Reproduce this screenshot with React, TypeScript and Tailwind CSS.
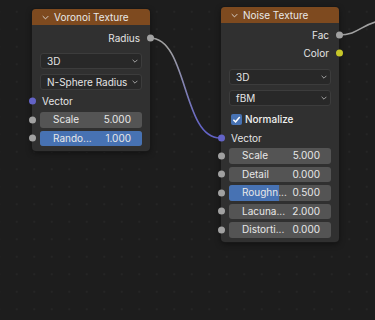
import React from 'react';

type SocketColor = 'gray' | 'purple' | 'yellow';

const socketClass: Record<SocketColor, string> = {
  gray: 'bg-[#a1a1a1]',
  purple: 'bg-[#6363c7]',
  yellow: 'bg-[#c7c729]',
};

function Socket({ side, color }: { side: 'left' | 'right'; color: SocketColor }) {
  return (
    <span
      className={`absolute top-1/2 -translate-y-1/2 w-[7px] h-[7px] rounded-full ${socketClass[color]} ${
        side === 'left' ? 'left-[-3.5px]' : 'right-[-3.5px]'
      }`}
    />
  );
}

function Chevron({ className = '' }: { className?: string }) {
  return (
    <svg viewBox="0 0 10 6" className={className} fill="none" stroke="currentColor" strokeWidth="1.2">
      <path d="M1 1 L5 5 L9 1" />
    </svg>
  );
}

function NodeHeader({ title }: { title: string }) {
  return (
    <div className="h-[16px] rounded-t-[4px] bg-[#7e4a1f] flex items-center pl-[10px] gap-[5px] text-[#e8e8e8]">
      <Chevron className="w-[7px] h-[5px]" />
      <span className="text-[10px] leading-none">{title}</span>
    </div>
  );
}

function Output({ label, color, className = '' }: { label: string; color: SocketColor; className?: string }) {
  return (
    <div className={`relative h-[16px] flex items-center justify-end pr-[10px] ${className}`}>
      <span className="text-[10px] text-[#e4e4e4]">{label}</span>
      <Socket side="right" color={color} />
    </div>
  );
}

function Input({ label, className = '' }: { label: string; className?: string }) {
  return (
    <div className={`relative h-[16px] flex items-center pl-[10px] ${className}`}>
      <span className="text-[10px] text-[#e4e4e4]">{label}</span>
      <Socket side="left" color="purple" />
    </div>
  );
}

function Dropdown({ value, className = '' }: { value: string; className?: string }) {
  return (
    <div className={`mx-[8px] h-[16px] rounded-[3px] bg-[#282828] border border-[#3c3c3c] flex items-center justify-between pl-[6px] pr-[3px] ${className}`}>
      <span className="text-[10px] text-[#e4e4e4]">{value}</span>
      <Chevron className="w-[6px] h-[4px] text-[#cfcfcf]" />
    </div>
  );
}

function Field({
  label,
  value,
  fill = 0,
  className = '',
}: {
  label: string;
  value: string;
  fill?: number;
  className?: string;
}) {
  return (
    <div className={`relative h-[15.5px] ${className}`}>
      <Socket side="left" color="gray" />
      <div className="relative mx-[8px] h-full rounded-[3px] bg-[#545454] overflow-hidden flex items-center justify-between pl-[13px] pr-[11px]">
        {fill > 0 && (
          <div className="absolute inset-y-0 left-0 bg-[#4772b3]" style={{ width: `${fill * 100}%` }} />
        )}
        <span className="relative text-[10px] text-[#e8e8e8]">{label}</span>
        <span className="relative text-[10px] text-[#e8e8e8]">{value}</span>
      </div>
    </div>
  );
}

export default function App() {
  return (
    <div
      className="relative w-[375px] h-[320px] overflow-hidden bg-[#1d1d1d] bg-[radial-gradient(circle,#252525_0.8px,transparent_1px)] bg-[size:17.5px_17.5px] bg-[position:8px_3px]"
      style={{ fontFamily: 'Inter, "DejaVu Sans", sans-serif' }}
    >
      {/* links */}
      <svg className="absolute inset-0" width="375" height="320" viewBox="0 0 375 320" fill="none">
        <defs>
          <linearGradient id="wire" x1="150" y1="38" x2="220" y2="138" gradientUnits="userSpaceOnUse">
            <stop offset="0.15" stopColor="#a1a1a1" />
            <stop offset="0.85" stopColor="#6363c7" />
          </linearGradient>
        </defs>
        <path d="M150 38 C 188 38, 182 138, 220 138" stroke="url(#wire)" strokeWidth="1.6" />
        <path d="M339 35 C 358 35, 362 24, 380 21" stroke="#a1a1a1" strokeWidth="1.6" />
      </svg>

      {/* Voronoi Texture */}
      <div className="absolute left-[32px] top-[9px] w-[118px] rounded-[4px] bg-[#303030] shadow-[0_0_0_1px_#181818,0_2px_6px_rgba(0,0,0,0.45)] pb-[5px]">
        <NodeHeader title="Voronoi Texture" />
        <Output label="Radius" color="gray" className="mt-[5px]" />
        <Dropdown value="3D" className="mt-[7px]" />
        <Dropdown value="N-Sphere Radius" className="mt-[5px]" />
        <Input label="Vector" className="mt-[3px]" />
        <Field label="Scale" value="5.000" className="mt-[3px]" />
        <Field label="Rando..." value="1.000" fill={1} className="mt-[3px]" />
      </div>

      {/* Noise Texture */}
      <div className="absolute left-[221px] top-[7px] w-[118px] rounded-[4px] bg-[#303030] shadow-[0_0_0_1px_#181818,0_2px_6px_rgba(0,0,0,0.45)] pb-[4.5px]">
        <NodeHeader title="Noise Texture" />
        <Output label="Fac" color="gray" className="mt-[4px]" />
        <Output label="Color" color="yellow" className="mt-[2px]" />
        <Dropdown value="3D" className="mt-[8px]" />
        <Dropdown value="fBM" className="mt-[5px]" />
        <div className="mt-[5px] h-[16px] flex items-center pl-[10px] gap-[3px]">
          <span className="w-[11px] h-[11px] rounded-[2px] bg-[#4772b3] flex items-center justify-center">
            <svg viewBox="0 0 10 10" className="w-[9px] h-[9px]" fill="none" stroke="#ffffff" strokeWidth="1.6">
              <path d="M1.5 5.2 L4 7.6 L8.6 2.2" />
            </svg>
          </span>
          <span className="text-[10px] text-[#f0f0f0] font-medium">Normalize</span>
        </div>
        <Input label="Vector" className="mt-[3px]" />
        <Field label="Scale" value="5.000" className="mt-[2px]" />
        <Field label="Detail" value="0.000" className="mt-[3px]" />
        <Field label="Roughn..." value="0.500" fill={0.49} className="mt-[3px]" />
        <Field label="Lacuna..." value="2.000" className="mt-[3px]" />
        <Field label="Distorti..." value="0.000" className="mt-[3px]" />
      </div>
    </div>
  );
}
